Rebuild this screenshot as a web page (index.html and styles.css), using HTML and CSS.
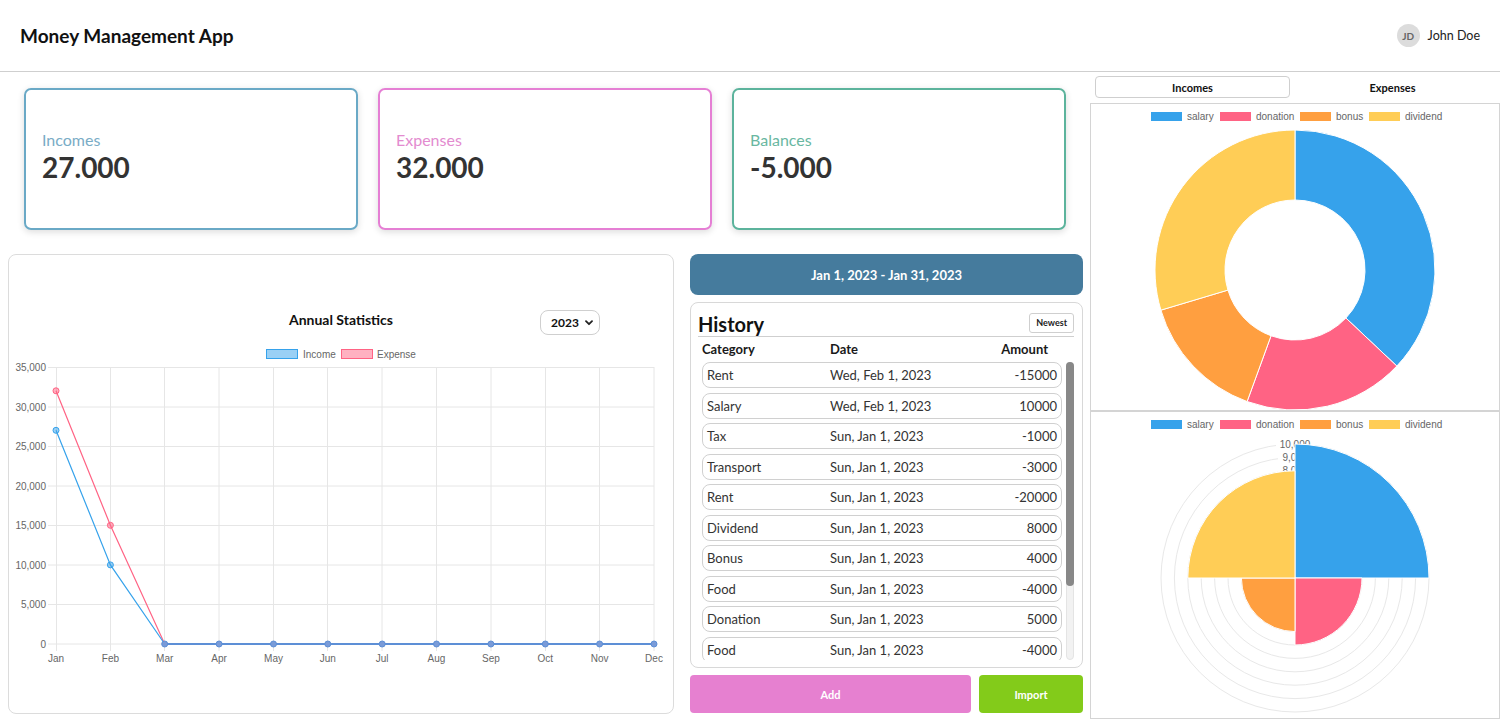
FILE: index.html
```html
<!DOCTYPE html>
<html lang="en">
<head>
<meta charset="utf-8">
<title>Money Management App</title>
<link rel="stylesheet" href="styles.css">
</head>
<body>
<header class="topbar">
  <h1 class="brand">Money Management App</h1>
  <div class="user">
    <span class="avatar">JD</span>
    <span class="user-name">John Doe</span>
  </div>
</header>
<main class="main">
  <section class="left">
    <div class="summary">
      <div class="stat stat-income"><span class="stat-label">Incomes</span><span class="stat-value">27.000</span></div>
      <div class="stat stat-expense"><span class="stat-label">Expenses</span><span class="stat-value">32.000</span></div>
      <div class="stat stat-balance"><span class="stat-label">Balances</span><span class="stat-value">-5.000</span></div>
    </div>
    <div class="lower">
      <div class="chart-card">
        <div class="chart-head">
          <h2 class="chart-title">Annual Statistics</h2>
          <div class="year-select">
            <select class="year-input"><option>2023</option></select>
            <svg class="chevron" width="8" height="6" viewBox="0 0 8 6"><path d="M1 1.2 L4 4.2 L7 1.2" fill="none" stroke="#222" stroke-width="1.8" stroke-linecap="round" stroke-linejoin="round"/></svg>
          </div>
        </div>
        <svg class="line-chart" width="664" height="330" viewBox="0 0 664 330">
          <g class="legend">
            <rect x="257.5" y="9.5" width="31" height="9" fill="rgba(54,162,235,0.5)" stroke="#36a2eb"/>
            <text x="294" y="17.5">Income</text>
            <rect x="332.5" y="9.5" width="31" height="9" fill="rgba(255,99,132,0.5)" stroke="#ff6384"/>
            <text x="368" y="17.5">Expense</text>
          </g>
          <g class="grid" stroke="#e6e6e6" stroke-width="1">
            <line x1="39" y1="27.5" x2="645" y2="27.5"/>
            <line x1="39" y1="67" x2="645" y2="67"/>
            <line x1="39" y1="106.5" x2="645" y2="106.5"/>
            <line x1="39" y1="146" x2="645" y2="146"/>
            <line x1="39" y1="185.5" x2="645" y2="185.5"/>
            <line x1="39" y1="225" x2="645" y2="225"/>
            <line x1="39" y1="264.5" x2="645" y2="264.5"/>
            <line x1="39" y1="304" x2="645" y2="304"/>
            <line x1="47.5" y1="27" x2="47.5" y2="311"/>
            <line x1="101.5" y1="27" x2="101.5" y2="311"/>
            <line x1="155.5" y1="27" x2="155.5" y2="311"/>
            <line x1="210" y1="27" x2="210" y2="311"/>
            <line x1="264.5" y1="27" x2="264.5" y2="311"/>
            <line x1="318.5" y1="27" x2="318.5" y2="311"/>
            <line x1="373" y1="27" x2="373" y2="311"/>
            <line x1="427.5" y1="27" x2="427.5" y2="311"/>
            <line x1="482" y1="27" x2="482" y2="311"/>
            <line x1="536.5" y1="27" x2="536.5" y2="311"/>
            <line x1="590.5" y1="27" x2="590.5" y2="311"/>
            <line x1="645" y1="27" x2="645" y2="311"/>
          </g>
          <g class="ylabels">
            <text x="37" y="31">35,000</text>
            <text x="37" y="70.5">30,000</text>
            <text x="37" y="110">25,000</text>
            <text x="37" y="149.5">20,000</text>
            <text x="37" y="189">15,000</text>
            <text x="37" y="228.5">10,000</text>
            <text x="37" y="268">5,000</text>
            <text x="37" y="307.5">0</text>
          </g>
          <g class="xlabels">
            <text x="47" y="322">Jan</text>
            <text x="101.4" y="322">Feb</text>
            <text x="155.7" y="322">Mar</text>
            <text x="210.1" y="322">Apr</text>
            <text x="264.5" y="322">May</text>
            <text x="318.8" y="322">Jun</text>
            <text x="373.2" y="322">Jul</text>
            <text x="427.5" y="322">Aug</text>
            <text x="481.9" y="322">Sep</text>
            <text x="536.3" y="322">Oct</text>
            <text x="590.6" y="322">Nov</text>
            <text x="645" y="322">Dec</text>
          </g>
          <g class="series-expense">
            <polyline fill="none" stroke="#ff6384" stroke-width="1.2" points="47,50.8 101.4,185.3 155.7,304 210.1,304 264.5,304 318.8,304 373.2,304 427.5,304 481.9,304 536.3,304 590.6,304 645,304"/>
            <g fill="rgba(255,99,132,0.5)" stroke="#ff6384" stroke-width="1">
              <circle cx="47" cy="50.8" r="3"/><circle cx="101.4" cy="185.3" r="3"/>
            </g>
          </g>
          <g class="series-income">
            <polyline fill="none" stroke="#36a2eb" stroke-width="1.2" points="47,90.3 101.4,224.9 155.7,304 210.1,304 264.5,304 318.8,304 373.2,304 427.5,304 481.9,304 536.3,304 590.6,304 645,304"/>
            <line x1="155.7" y1="304" x2="645" y2="304" stroke="#5d8fd6" stroke-width="2"/>
            <g fill="rgba(54,162,235,0.5)" stroke="#36a2eb" stroke-width="1">
              <circle cx="47" cy="90.3" r="3"/><circle cx="101.4" cy="224.9" r="3"/>
            </g>
            <g fill="#7a9bd8" stroke="#5d8fd6" stroke-width="1">
              <circle cx="155.7" cy="304" r="3"/><circle cx="210.1" cy="304" r="3"/><circle cx="264.5" cy="304" r="3"/>
              <circle cx="318.8" cy="304" r="3"/><circle cx="373.2" cy="304" r="3"/><circle cx="427.5" cy="304" r="3"/>
              <circle cx="481.9" cy="304" r="3"/><circle cx="536.3" cy="304" r="3"/><circle cx="590.6" cy="304" r="3"/>
              <circle cx="645" cy="304" r="3"/>
            </g>
          </g>
        </svg>
      </div>
      <div class="middle">
        <div class="range">Jan 1, 2023 - Jan 31, 2023</div>
        <div class="history">
          <div class="history-head">
            <h2 class="history-title">History</h2>
            <button class="sort-btn">Newest</button>
          </div>
          <div class="cols"><span>Category</span><span>Date</span><span class="amt">Amount</span></div>
          <div class="tx-scroll">
            <ul class="tx-list">
              <li class="tx"><span>Rent</span><span>Wed, Feb 1, 2023</span><span class="amt">-15000</span></li>
              <li class="tx"><span>Salary</span><span>Wed, Feb 1, 2023</span><span class="amt">10000</span></li>
              <li class="tx"><span>Tax</span><span>Sun, Jan 1, 2023</span><span class="amt">-1000</span></li>
              <li class="tx"><span>Transport</span><span>Sun, Jan 1, 2023</span><span class="amt">-3000</span></li>
              <li class="tx"><span>Rent</span><span>Sun, Jan 1, 2023</span><span class="amt">-20000</span></li>
              <li class="tx"><span>Dividend</span><span>Sun, Jan 1, 2023</span><span class="amt">8000</span></li>
              <li class="tx"><span>Bonus</span><span>Sun, Jan 1, 2023</span><span class="amt">4000</span></li>
              <li class="tx"><span>Food</span><span>Sun, Jan 1, 2023</span><span class="amt">-4000</span></li>
              <li class="tx"><span>Donation</span><span>Sun, Jan 1, 2023</span><span class="amt">5000</span></li>
              <li class="tx"><span>Food</span><span>Sun, Jan 1, 2023</span><span class="amt">-4000</span></li>
            </ul>
            <div class="scrollbar"><div class="scroll-thumb"></div></div>
          </div>
        </div>
        <div class="actions">
          <button class="btn btn-add">Add</button>
          <button class="btn btn-import">Import</button>
        </div>
      </div>
    </div>
  </section>
  <aside class="right">
    <div class="tabs">
      <button class="tab tab-active">Incomes</button>
      <button class="tab">Expenses</button>
    </div>
    <div class="panel">
      <svg class="pie" width="408" height="306" viewBox="0 0 408 306">
        <g class="legend">
          <rect x="60" y="8" width="31" height="9" fill="#36a2eb"/><text x="96" y="16">salary</text>
          <rect x="129" y="8" width="31" height="9" fill="#ff6384"/><text x="165" y="16">donation</text>
          <rect x="209" y="8" width="31" height="9" fill="#ff9f40"/><text x="245" y="16">bonus</text>
          <rect x="278" y="8" width="31" height="9" fill="#ffcd56"/><text x="314" y="16">dividend</text>
        </g>
        <g stroke="#fff" stroke-width="1">
          <path fill="#36a2eb" d="M204 26 A140 140 0 0 1 305.84 262.07 L254.92 214.03 A70 70 0 0 0 204 96 Z"/>
          <path fill="#ff6384" d="M305.84 262.07 A140 140 0 0 1 156.12 297.56 L180.06 231.78 A70 70 0 0 0 254.92 214.03 Z"/>
          <path fill="#ff9f40" d="M156.12 297.56 A140 140 0 0 1 69.88 206.15 L136.94 186.08 A70 70 0 0 0 180.06 231.78 Z"/>
          <path fill="#ffcd56" d="M69.88 206.15 A140 140 0 0 1 204 26 L204 96 A70 70 0 0 0 136.94 186.08 Z"/>
        </g>
      </svg>
    </div>
    <div class="panel">
      <svg class="pie" width="408" height="306" viewBox="0 0 408 306">
        <g class="legend">
          <rect x="60" y="8" width="31" height="9" fill="#36a2eb"/><text x="96" y="16">salary</text>
          <rect x="129" y="8" width="31" height="9" fill="#ff6384"/><text x="165" y="16">donation</text>
          <rect x="209" y="8" width="31" height="9" fill="#ff9f40"/><text x="245" y="16">bonus</text>
          <rect x="278" y="8" width="31" height="9" fill="#ffcd56"/><text x="314" y="16">dividend</text>
        </g>
        <g fill="none" stroke="#e8e8e8" stroke-width="1">
          <circle cx="204" cy="166" r="13.4"/><circle cx="204" cy="166" r="26.8"/>
          <circle cx="204" cy="166" r="40.2"/><circle cx="204" cy="166" r="53.6"/>
          <circle cx="204" cy="166" r="67"/><circle cx="204" cy="166" r="80.4"/>
          <circle cx="204" cy="166" r="93.8"/><circle cx="204" cy="166" r="107.2"/>
          <circle cx="204" cy="166" r="120.6"/><circle cx="204" cy="166" r="134"/>
        </g>
        <g class="ticks">
          <rect x="187" y="53" width="34" height="11" fill="#fff"/><text x="204" y="62">8,000</text>
          <rect x="187" y="40" width="34" height="11" fill="#fff"/><text x="204" y="49">9,000</text>
          <rect x="185" y="27" width="38" height="11" fill="#fff"/><text x="204" y="36">10,000</text>
        </g>
        <g stroke="#fff" stroke-width="1">
          <path fill="#36a2eb" d="M204 166 L204 32 A134 134 0 0 1 338 166 Z"/>
          <path fill="#ff6384" d="M204 166 L271 166 A67 67 0 0 1 204 233 Z"/>
          <path fill="#ff9f40" d="M204 166 L204 219.6 A53.6 53.6 0 0 1 150.4 166 Z"/>
          <path fill="#ffcd56" d="M204 166 L96.8 166 A107.2 107.2 0 0 1 204 58.8 Z"/>
        </g>
      </svg>
    </div>
  </aside>
</main>
</body>
</html>
```

FILE: styles.css
```css
* { box-sizing: border-box; }

html, body {
  margin: 0;
  padding: 0;
}

body {
  width: 1500px;
  height: 720px;
  overflow: hidden;
  background: #fff;
  color: #222;
  font-family: "Lato", "Noto Sans", sans-serif;
}

h1, h2 { margin: 0; }

button, select {
  font-family: inherit;
}

/* ---------- header ---------- */
.topbar {
  height: 72px;
  border-bottom: 1px solid #cfcfcf;
  display: flex;
  align-items: center;
  justify-content: space-between;
  padding: 0 20px;
}

.brand {
  font-size: 19px;
  font-weight: 700;
  color: #111;
}

.user {
  display: flex;
  align-items: center;
  gap: 8px;
}

.avatar {
  width: 23px;
  height: 23px;
  border-radius: 50%;
  background: #dcdcdc;
  color: #666;
  font-size: 10px;
  font-weight: 700;
  display: flex;
  align-items: center;
  justify-content: center;
}

.user-name {
  font-size: 12.5px;
  color: #222;
}

/* ---------- main ---------- */
.main {
  display: flex;
}

.left {
  width: 1090px;
  flex: none;
}

.summary {
  display: flex;
  gap: 20px;
  padding: 16px 0 0 24px;
}

.stat {
  width: 334px;
  height: 142px;
  border: 2px solid;
  border-radius: 7px;
  box-shadow: 0 2px 7px rgba(0, 0, 0, 0.14);
  display: flex;
  flex-direction: column;
  justify-content: center;
  padding: 0 16px 4px;
}

.stat-label {
  font-size: 16px;
  line-height: 20px;
}

.stat-value {
  font-size: 28px;
  line-height: 34px;
  font-weight: 700;
  color: #333;
}

.stat-income { border-color: #6aa9c6; }
.stat-income .stat-label { color: #79acc6; }
.stat-expense { border-color: #e57fd4; }
.stat-expense .stat-label { color: #e38bcf; }
.stat-balance { border-color: #5cb39c; }
.stat-balance .stat-label { color: #69b7a1; }

.lower {
  display: flex;
  gap: 16px;
  margin-top: 24px;
  padding-left: 8px;
}

/* ---------- line chart card ---------- */
.chart-card {
  width: 666px;
  height: 460px;
  border: 1px solid #dcdcdc;
  border-radius: 8px;
}

.chart-head {
  margin-top: 54px;
  height: 26px;
  display: grid;
  grid-template-columns: 1fr auto 1fr;
  align-items: center;
}

.chart-title {
  grid-column: 2;
  font-size: 14px;
  font-weight: 700;
  color: #111;
  margin-top: -6px;
}

.year-select {
  grid-column: 3;
  justify-self: end;
  margin-right: 73px;
  position: relative;
  width: 60px;
  height: 25px;
}

.year-input {
  appearance: none;
  -webkit-appearance: none;
  width: 60px;
  height: 25px;
  border: 1px solid #cfcfcf;
  border-radius: 8px;
  background: #fff;
  font-size: 12px;
  font-weight: 700;
  color: #111;
  padding: 0 0 0 10px;
}

.chevron {
  position: absolute;
  right: 7px;
  top: 10px;
}

.line-chart {
  display: block;
  margin-top: 5px;
  font-family: "Liberation Sans", Arial, sans-serif;
  font-size: 10px;
}

.line-chart .legend text,
.line-chart .ylabels text,
.line-chart .xlabels text {
  fill: #666;
}

.line-chart .ylabels text { text-anchor: end; }
.line-chart .xlabels text { text-anchor: middle; }

/* ---------- middle column ---------- */
.middle {
  width: 393px;
  display: flex;
  flex-direction: column;
  gap: 7px;
}

.range {
  height: 41px;
  border-radius: 8px;
  background: #457b9d;
  color: #fff;
  font-size: 13px;
  font-weight: 700;
  display: flex;
  align-items: center;
  justify-content: center;
}

.history {
  height: 366px;
  border: 1px solid #d8d8d8;
  border-radius: 8px;
  padding: 6px 8px 7px 7px;
  display: flex;
  flex-direction: column;
}

.history-head {
  height: 28px;
  border-bottom: 1px solid #cfcfcf;
  display: flex;
  align-items: center;
  justify-content: space-between;
  flex: none;
}

.history-title {
  font-size: 20px;
  font-weight: 700;
  color: #111;
  margin-top: 3px;
}

.sort-btn {
  height: 20px;
  padding: 0 6px;
  border: 1px solid #cfcfcf;
  border-radius: 3px;
  background: #fff;
  font-size: 9px;
  font-weight: 700;
  color: #222;
}

.cols {
  height: 24px;
  flex: none;
  display: grid;
  grid-template-columns: 128px 1fr auto;
  align-items: center;
  padding: 0 26px 0 4px;
  font-size: 13px;
  font-weight: 700;
  color: #1a1a1a;
}

.amt { text-align: right; }

.tx-scroll {
  display: flex;
  gap: 4px;
  height: 298px;
  margin: 1px 0 0 4px;
  flex: none;
}

.tx-list {
  list-style: none;
  margin: 0;
  padding: 0;
  flex: 1;
  overflow: hidden;
}

.scrollbar {
  width: 8px;
  flex: none;
  background: #f2f2f2;
  border: 1px solid #e4e4e4;
  border-radius: 4px;
}

.scroll-thumb {
  height: 224px;
  margin: -1px;
  background: #888;
  border-radius: 4px;
}

.tx {
  height: 26px;
  margin-bottom: 4.5px;
  border: 1px solid #d0d0d0;
  border-radius: 8px;
  display: grid;
  grid-template-columns: 123px 1fr auto;
  align-items: center;
  padding: 0 4px;
  font-size: 13px;
  color: #333;
}

.actions {
  height: 38px;
  display: flex;
  gap: 8px;
}

.btn {
  border: none;
  border-radius: 4px;
  color: #fff;
  font-size: 11px;
  font-weight: 700;
}

.btn-add {
  width: 281px;
  background: #e680d0;
}

.btn-import {
  flex: 1;
  background: #83cb1a;
}

/* ---------- right column ---------- */
.right {
  width: 410px;
  flex: none;
}

.tabs {
  margin-top: 4px;
  height: 22px;
  display: grid;
  grid-template-columns: 1fr 1fr;
  gap: 5px;
  padding: 0 10px 0 5px;
}

.tab {
  border: 1px solid transparent;
  border-radius: 4px;
  background: #fff;
  font-size: 11px;
  font-weight: 700;
  color: #111;
}

.tab-active {
  border-color: #cfcfcf;
}

.panel {
  height: 308px;
  border: 1px solid #d4d4d4;
}

.tabs + .panel {
  margin-top: 5px;
}

.pie {
  display: block;
  font-family: "Liberation Sans", Arial, sans-serif;
  font-size: 10px;
}

.pie .legend text { fill: #666; }
.pie .ticks text { fill: #666; text-anchor: middle; }
```
